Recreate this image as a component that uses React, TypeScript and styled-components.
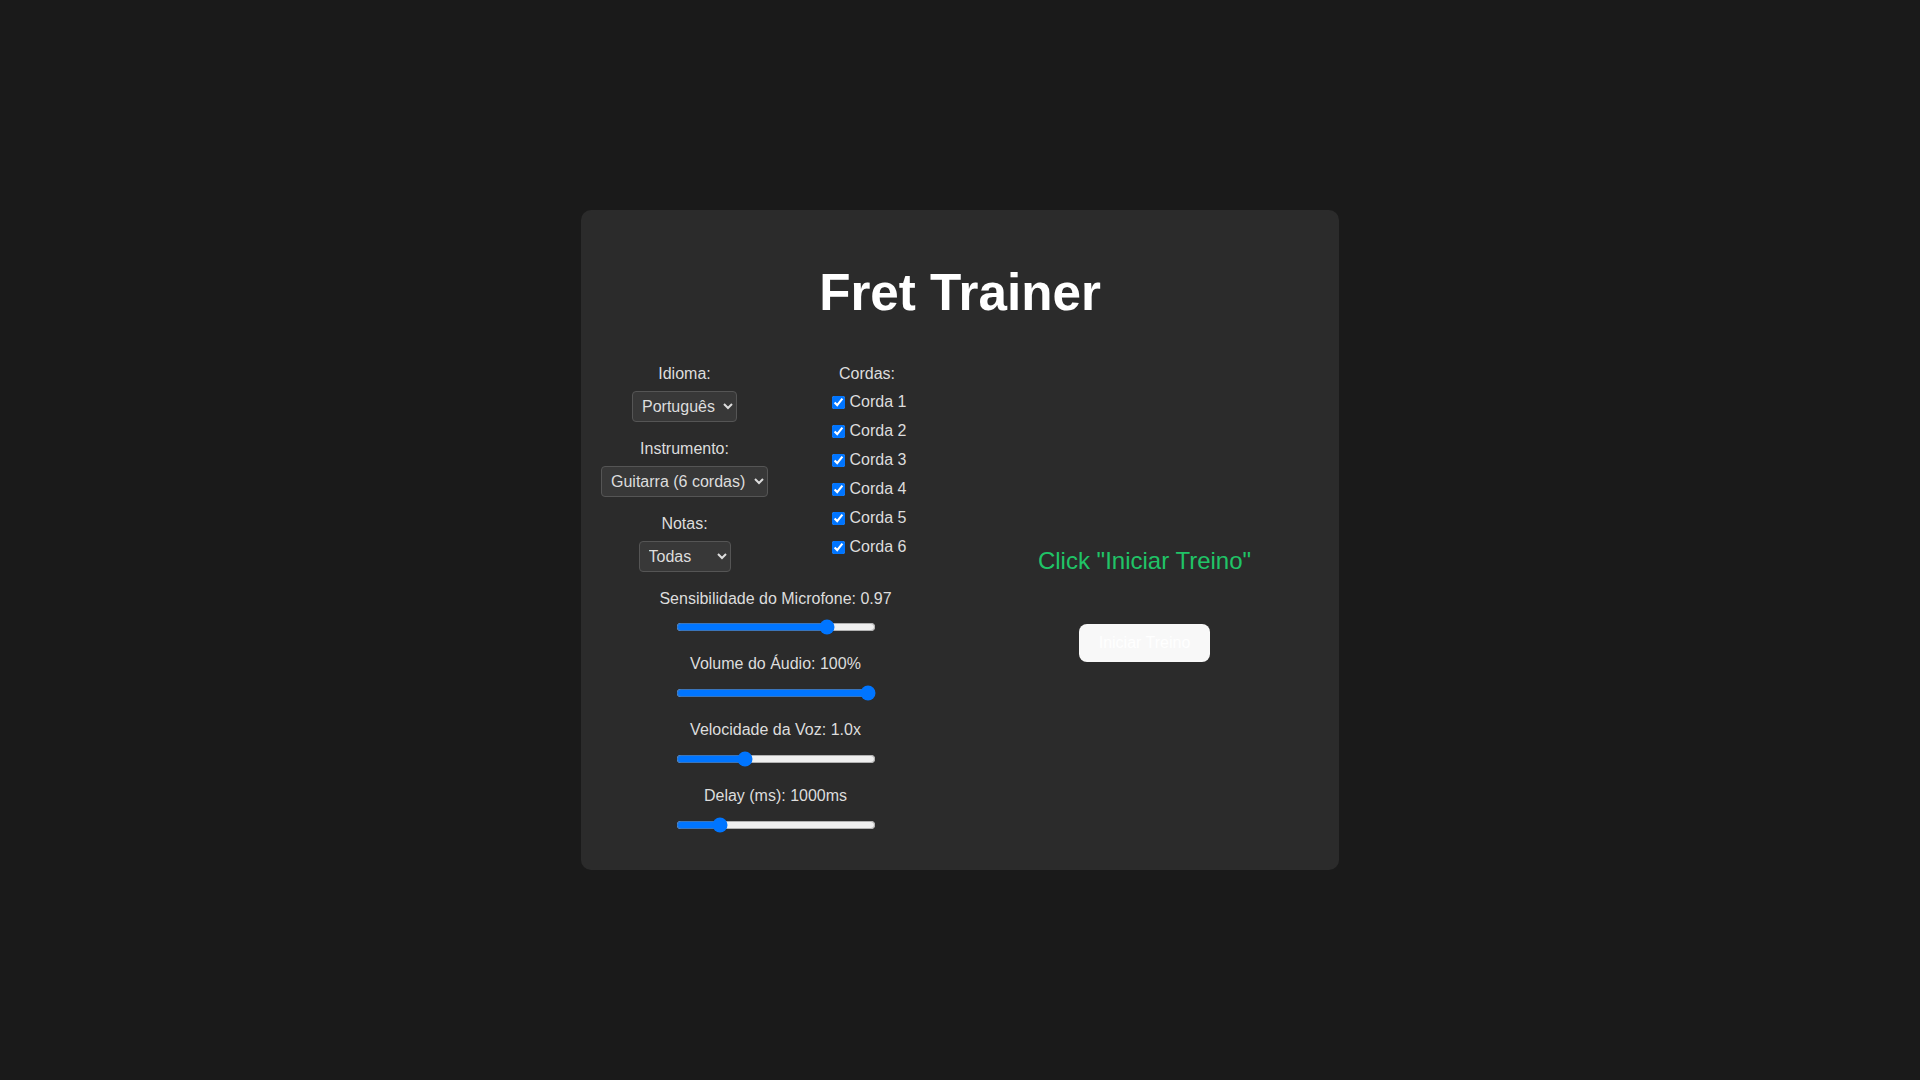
import React, { useState } from "react";
import styled, { createGlobalStyle } from "styled-components";

const GlobalStyle = createGlobalStyle`
  html, body {
    margin: 0;
    padding: 0;
    background: #1a1a1a;
  }
  body {
    font-family: "Liberation Sans", Arial, sans-serif;
    color: #dddddd;
  }
  * { box-sizing: border-box; }
`;

const Page = styled.div`
  min-height: 100vh;
  display: flex;
  align-items: center;
  justify-content: center;
`;

const Card = styled.div`
  width: 758px;
  background: #2b2b2b;
  border-radius: 10px;
  padding: 20px;
`;

const Title = styled.h1`
  margin: 33.5px 0 42.5px;
  font-size: 51.2px;
  font-weight: bold;
  color: #ffffff;
  text-align: center;
`;

const Main = styled.div`
  display: grid;
  grid-template-columns: 1fr 1fr;
  gap: 20px;
`;

const Controls = styled.div`
  text-align: center;
`;

const SettingsGrid = styled.div`
  display: grid;
  grid-template-columns: 1fr 1fr;
  gap: 20px;
`;

const Group = styled.div`
  margin-bottom: 17.9px;
`;

const StringsGroup = styled(Group)`
  padding-right: 4px;
`;

const Label = styled.label`
  display: block;
  font-size: 16px;
  color: #dddddd;
  margin-bottom: 8px;
`;

const Select = styled.select`
  font-family: inherit;
  font-size: 16px;
  padding: 5px;
  background: #383838;
  color: #dddddd;
  border: 1px solid #555555;
  border-radius: 4px;
`;

const StringList = styled.div`
  display: flex;
  flex-direction: column;
  align-items: center;
  gap: 10px;
  padding-top: 2px;
`;

const StringOption = styled.label`
  display: flex;
  align-items: center;
  height: 19px;
  font-size: 16px;
  color: #dddddd;
`;

const Checkbox = styled.input`
  margin: 3px 5px 3px 4px;
  width: 13px;
  height: 13px;
`;

const SliderGroup = styled.div`
  margin-bottom: 16.4px;
  &:last-child {
    margin-bottom: 13.5px;
  }
`;

const SliderLabel = styled.label`
  display: block;
  font-size: 16px;
  color: #dddddd;
  margin-bottom: 9.5px;
`;

const Range = styled.input`
  width: 200px;
  margin: 2px;
`;

const Display = styled.div`
  display: flex;
  flex-direction: column;
  align-items: center;
  justify-content: center;
  padding-bottom: 5.5px;
`;

const Prompt = styled.div`
  font-size: 24px;
  color: #20c467;
  margin-bottom: 49px;
`;

const StartButton = styled.button`
  font-family: inherit;
  font-size: 16px;
  padding: 10px 20px;
  border: none;
  border-radius: 8px;
  background: #f8f8f8;
  color: #ffffff;
  cursor: pointer;
`;

export default function App() {
  const [strings, setStrings] = useState([true, true, true, true, true, true]);
  const [sens, setSens] = useState(0.97);
  const [vol, setVol] = useState(100);
  const [speed, setSpeed] = useState(1.0);
  const [delay, setDelay] = useState(1000);

  return (
    <>
      <GlobalStyle />
      <Page>
        <Card>
          <Title>Fret Trainer</Title>
          <Main>
            <Controls>
              <SettingsGrid>
                <div>
                  <Group>
                    <Label>Idioma:</Label>
                    <Select defaultValue="pt">
                      <option value="pt">Português</option>
                      <option value="en">English</option>
                    </Select>
                  </Group>
                  <Group>
                    <Label>Instrumento:</Label>
                    <Select defaultValue="g6">
                      <option value="g6">Guitarra (6 cordas)</option>
                      <option value="b4">Baixo (4 cordas)</option>
                    </Select>
                  </Group>
                  <Group>
                    <Label>Notas:</Label>
                    <Select defaultValue="all">
                      <option value="all">Todas</option>
                      <option value="nat">Naturais</option>
                    </Select>
                  </Group>
                </div>
                <StringsGroup>
                  <Label>Cordas:</Label>
                  <StringList>
                    {strings.map((on, i) => (
                      <StringOption key={i}>
                        <Checkbox
                          type="checkbox"
                          checked={on}
                          onChange={() =>
                            setStrings(strings.map((s, j) => (j === i ? !s : s)))
                          }
                        />
                        Corda {i + 1}
                      </StringOption>
                    ))}
                  </StringList>
                </StringsGroup>
              </SettingsGrid>
              <SliderGroup>
                <SliderLabel>Sensibilidade do Microfone: {sens.toFixed(2)}</SliderLabel>
                <Range
                  type="range"
                  min={0.9}
                  max={0.99}
                  step={0.01}
                  value={sens}
                  onChange={(e) => setSens(parseFloat(e.target.value))}
                />
              </SliderGroup>
              <SliderGroup>
                <SliderLabel>Volume do Áudio: {vol}%</SliderLabel>
                <Range
                  type="range"
                  min={0}
                  max={100}
                  value={vol}
                  onChange={(e) => setVol(parseInt(e.target.value))}
                />
              </SliderGroup>
              <SliderGroup>
                <SliderLabel>Velocidade da Voz: {speed.toFixed(1)}x</SliderLabel>
                <Range
                  type="range"
                  min={0.5}
                  max={2}
                  step={0.1}
                  value={speed}
                  onChange={(e) => setSpeed(parseFloat(e.target.value))}
                />
              </SliderGroup>
              <SliderGroup>
                <SliderLabel>Delay (ms): {delay}ms</SliderLabel>
                <Range
                  type="range"
                  min={500}
                  max={3000}
                  step={100}
                  value={delay}
                  onChange={(e) => setDelay(parseInt(e.target.value))}
                />
              </SliderGroup>
            </Controls>
            <Display>
              <Prompt>Click "Iniciar Treino"</Prompt>
              <StartButton>Iniciar Treino</StartButton>
            </Display>
          </Main>
        </Card>
      </Page>
    </>
  );
}
